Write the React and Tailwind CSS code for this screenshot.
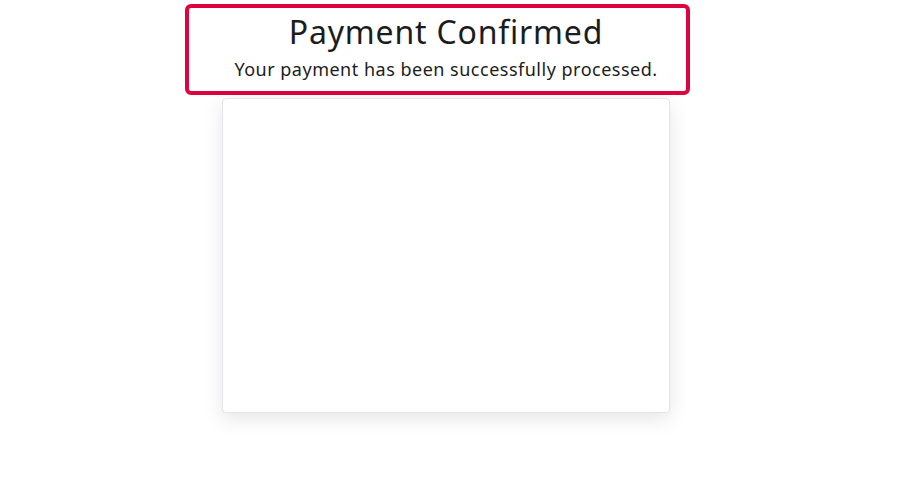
import React from 'react';

const App = () => {
  return (
    <div className="w-[900px] h-[484px] bg-white font-['Noto_Sans',sans-serif] text-[#1c1c1e] overflow-hidden">
      {/* Header */}
      <div className="pt-1">
        <div className="ml-[185px] w-[505px] h-[91px] border-4 border-[#de033c] rounded-md pl-[17px] flex flex-col items-center">
          <h1 className="text-[32px] leading-none mt-[8px] tracking-[0.8px]">Payment Confirmed</h1>
          <p className="text-[18px] leading-none mt-[12px] tracking-[0.5px]">Your payment has been successfully processed.</p>
        </div>
      </div>

      {/* Card */}
      <div className="ml-[222px] mt-[3px] w-[448px] h-[315px] bg-white border border-[#e3e5ea] rounded-[4px] shadow-[0_6px_20px_rgba(0,0,0,0.10)]"></div>
    </div>
  );
};

export default App;
